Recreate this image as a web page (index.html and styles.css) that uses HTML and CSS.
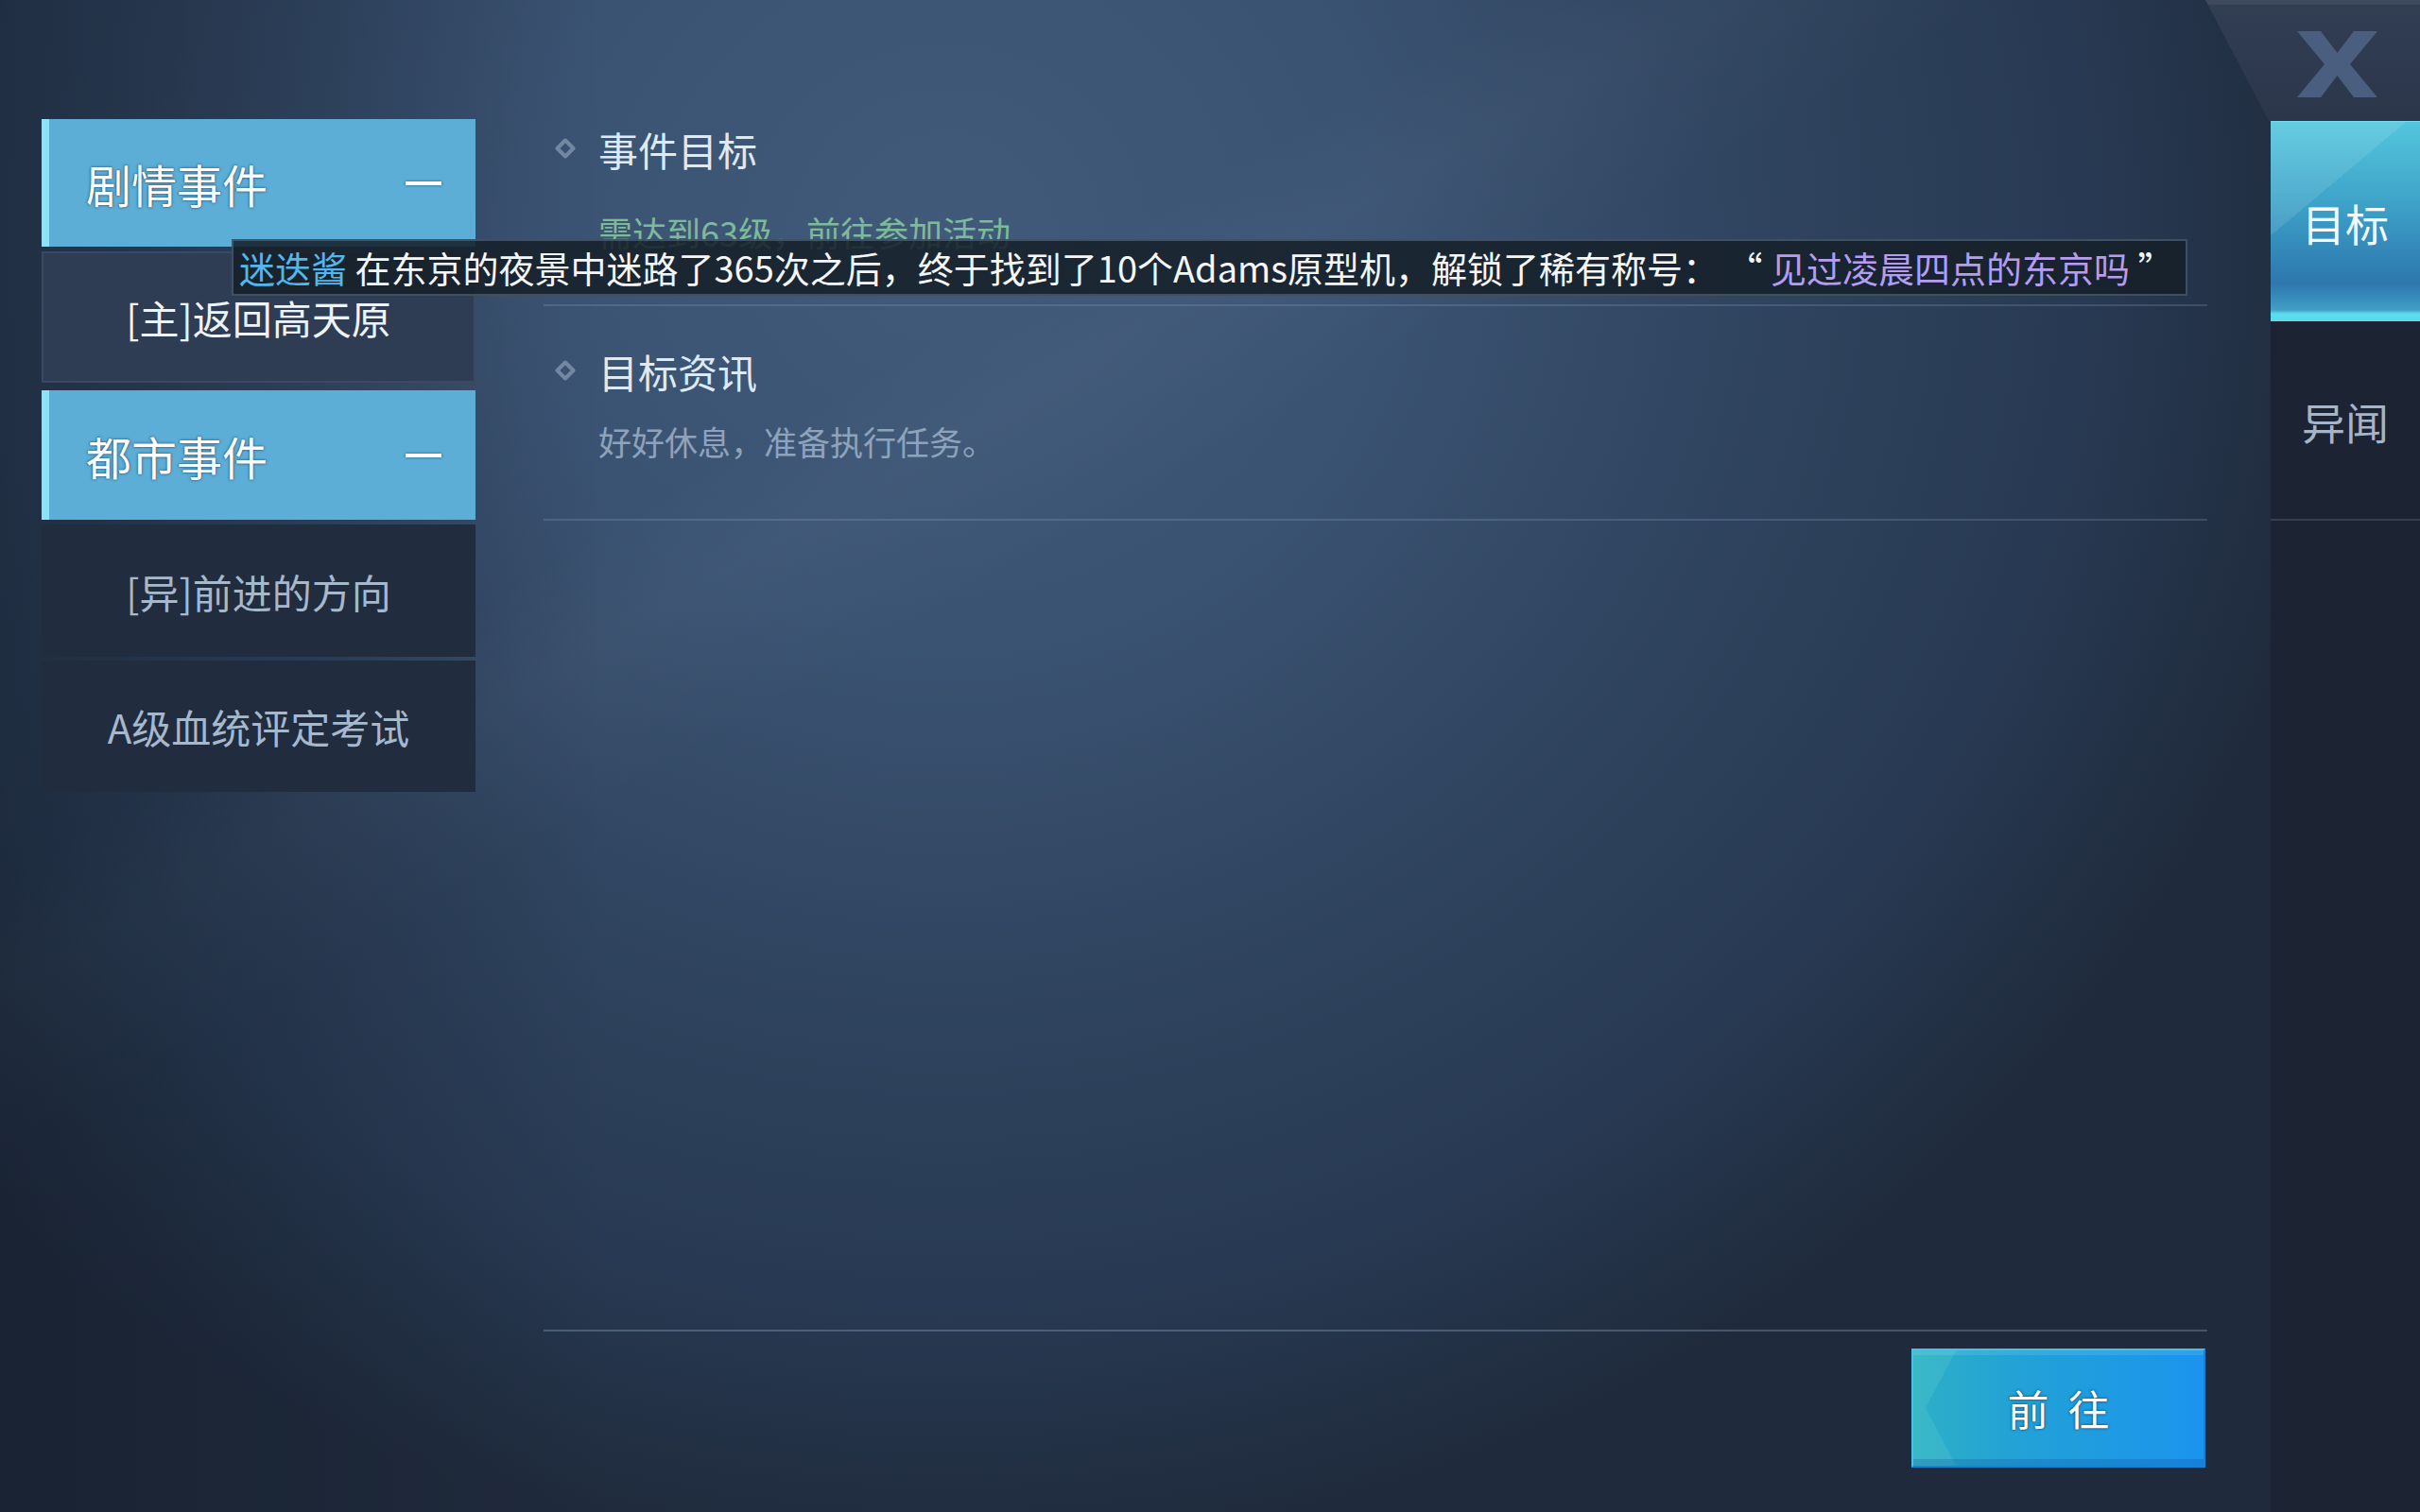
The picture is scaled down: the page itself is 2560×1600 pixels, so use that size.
FILE: index.html
```html
<!DOCTYPE html>
<html lang="zh-CN">
<head>
    <meta charset="UTF-8" />
    <meta name="viewport" content="width=device-width, initial-scale=1" />
    <title>事件</title>
    <link rel="stylesheet" href="styles.css">
</head>
<body>
    <div class="screen">
        <aside class="events">
            <div class="group-head"><span>剧情事件</span><i class="collapse"></i></div>
            <div class="event current">[主]返回高天原</div>
            <div class="group-head city"><span>都市事件</span><i class="collapse"></i></div>
            <div class="event first">[异]前进的方向</div>
            <div class="event">A级血统评定考试</div>
        </aside>

        <main class="detail">
            <section class="block goal-block">
                <h2 class="block-title">
                    <svg class="diamond" viewBox="0 0 24 24" width="24" height="24"><path d="M12 3.5 L20.5 12 L12 20.5 L3.5 12 Z" fill="none" stroke="#7a8ea6" stroke-width="4" stroke-linejoin="round"/></svg>
                    事件目标
                </h2>
                <p class="goal">需达到63级，前往参加活动</p>
            </section>
            <section class="block info-block">
                <h2 class="block-title">
                    <svg class="diamond" viewBox="0 0 24 24" width="24" height="24"><path d="M12 3.5 L20.5 12 L12 20.5 L3.5 12 Z" fill="none" stroke="#7a8ea6" stroke-width="4" stroke-linejoin="round"/></svg>
                    目标资讯
                </h2>
                <p class="info">好好休息，准备执行任务。</p>
            </section>
            <div class="spacer"></div>
            <footer class="actions">
                <button class="go">前往</button>
            </footer>
        </main>

        <nav class="tabs">
            <div class="tabs-top"></div>
            <div class="tab-list">
                <button class="tab active">目标</button>
                <button class="tab">异闻</button>
            </div>
        </nav>
    </div>

    <button class="close" aria-label="关闭">
        <svg viewBox="0 0 85 70" width="85" height="70">
            <polygon points="0,0 25,0 42.5,23 60,0 85,0 56,35 85,70 60,70 42.5,47 25,70 0,70 29,35" fill="#4a5f80"/>
        </svg>
    </button>

    <div class="broadcast">
        <span class="name">迷迭酱</span> 在东京的夜景中迷路了365次之后，终于找到了10个Adams原型机，解锁了稀有称号： “ <span class="title">见过凌晨四点的东京吗</span> ”
    </div>
</body>
</html>
```

FILE: styles.css
```css
body {
    margin: 0;
    width: 2560px;
    height: 1600px;
    overflow: hidden;
    position: relative;
    font-family: "Noto Sans CJK SC", "Noto Sans", sans-serif;
    background-color: #1f2a3c;
    background-image:
        linear-gradient(to right, rgba(18, 26, 40, 0.45) 0, rgba(18, 26, 40, 0) 640px),
        linear-gradient(150deg, rgba(255, 255, 255, 0) 30%, rgba(255, 255, 255, 0.025) 34%, rgba(255, 255, 255, 0) 40%),
        radial-gradient(ellipse 1500px 1400px at 1000px 250px, #415a7a 0%, #3b5373 30%, #304560 55%, #283a53 80%, #1f2a3c 100%);
}
.screen {
    display: flex;
    height: 1600px;
}

/* left list */
.events {
    margin: 126px 0 0 44px;
    width: 459px;
    display: flex;
    flex-direction: column;
}
.group-head {
    box-sizing: border-box;
    height: 135px;
    display: flex;
    align-items: center;
    justify-content: space-between;
    padding: 0 36px 0 39px;
    background: #5caed7;
    border-left: 8px solid #8fe2f6;
    color: #fff;
    font-size: 48px;
    text-shadow: 0 0 3px rgba(25, 70, 105, 0.9), 0 0 1px rgba(25, 70, 105, 0.9);
}
.group-head.city {
    margin-top: 8px;
    height: 137px;
}
.collapse {
    width: 38px;
    height: 4px;
    background: #fff;
    box-shadow: 0 0 3px rgba(25, 70, 105, 0.8);
}
.event {
    box-sizing: border-box;
    height: 139px;
    display: flex;
    align-items: center;
    justify-content: center;
    margin-top: 4px;
    background: #212c3f;
    color: #a5b8cc;
    font-size: 42px;
}
.event.first {
    margin-top: 5px;
    height: 140px;
}
.event.current {
    margin-top: 5px;
    background: #2e3c54;
    border: 2px solid #3b4a62;
    color: #eef3f8;
}

/* detail */
.detail {
    margin-left: 72px;
    width: 1760px;
    display: flex;
    flex-direction: column;
}
.block {
    border-bottom: 2px solid rgba(165, 190, 220, 0.2);
}
.goal-block {
    padding: 127px 0 52px;
}
.info-block {
    padding: 38px 0 57px;
}
.block-title {
    margin: 0;
    height: 60px;
    display: flex;
    align-items: center;
    gap: 23px;
    padding-left: 11px;
    font-size: 42px;
    font-weight: normal;
    color: #dfe9f3;
}
.diamond {
    flex-shrink: 0;
    opacity: 0.9;
}
.goal, .info {
    margin: 0;
    padding-left: 58px;
    line-height: 50px;
    font-size: 35px;
}
.goal {
    margin-top: 33px;
    font-size: 36px;
    color: #7cba9a;
}
.info {
    margin-top: 20px;
    color: #8ea3bb;
}
.spacer {
    flex: 1;
}
.actions {
    border-top: 2px solid rgba(165, 190, 220, 0.3);
    padding: 18px 2px 47px 0;
    display: flex;
    justify-content: flex-end;
}
.go {
    width: 311px;
    height: 126px;
    box-sizing: border-box;
    border: 2px solid #49bfeb;
    border-bottom-color: #1d7fcf;
    border-right-color: #1d7fcf;
    background:
        linear-gradient(to bottom, rgba(255, 255, 255, 0.1) 0, rgba(255, 255, 255, 0.1) 5px, rgba(255, 255, 255, 0) 5px, rgba(255, 255, 255, 0) calc(100% - 7px), rgba(10, 60, 150, 0.22) calc(100% - 7px)),
        linear-gradient(62deg, rgba(110, 215, 205, 0.2) 0, rgba(110, 215, 205, 0.2) 40px, rgba(110, 215, 205, 0) 40px) left bottom / 110px 50% no-repeat,
        linear-gradient(118deg, rgba(110, 215, 205, 0.2) 0, rgba(110, 215, 205, 0.2) 40px, rgba(110, 215, 205, 0) 40px) left top / 110px 50% no-repeat,
        linear-gradient(90deg, #2db0c6 0%, #22a2d6 35%, #1a94ee 100%);
    color: #fff;
    font-family: inherit;
    font-size: 44px;
    letter-spacing: 20px;
    padding: 0 0 0 20px;
    text-shadow: 0 0 3px rgba(10, 60, 110, 0.9), 0 0 1px rgba(10, 60, 110, 0.9);
    cursor: pointer;
}

/* right tabs */
.tabs {
    margin-left: 67px;
    width: 158px;
    display: flex;
    flex-direction: column;
}
.tabs-top {
    height: 128px;
}
.tab-list {
    flex: 1;
    display: flex;
    flex-direction: column;
    background: #1c2333;
}
.tab {
    height: 211px;
    border: none;
    border-bottom: 2px solid #353f50;
    background: transparent;
    color: #a3b5ca;
    font-family: inherit;
    font-size: 46px;
    padding: 0;
    cursor: pointer;
}
.tab.active {
    height: 212px;
    border-top: 1px solid #6fdcef;
    border-bottom: none;
    color: #f4f9fc;
    background:
        linear-gradient(to top, #5adcee 0, #5adcee 8px, rgba(90, 220, 238, 0.45) 12px, rgba(90, 220, 238, 0) 40px),
        linear-gradient(140deg, rgba(255, 255, 255, 0.1) 0, rgba(255, 255, 255, 0.1) 35%, rgba(255, 255, 255, 0) 35%),
        linear-gradient(to bottom, #54c6de 0%, #3ea3c8 40%, #2f7db2 75%, #2b6aa4 100%);
}

/* close corner */
.close {
    position: absolute;
    top: 0;
    right: 0;
    width: 227px;
    height: 128px;
    border: none;
    padding: 0;
    clip-path: polygon(0 0, 100% 0, 100% 100%, 67px 100%);
    background:
        linear-gradient(to bottom, rgba(255, 255, 255, 0.06) 0, rgba(255, 255, 255, 0.06) 5px, rgba(255, 255, 255, 0) 5px),
        linear-gradient(to bottom, #323e54, #2b364b);
    cursor: pointer;
}
.close svg {
    position: absolute;
    left: 97px;
    top: 33px;
}

/* scrolling broadcast */
.broadcast {
    position: absolute;
    left: 245px;
    top: 253px;
    width: 2069px;
    height: 60px;
    box-sizing: border-box;
    padding-left: 6px;
    background: rgba(22, 32, 41, 0.88);
    border: 2px solid rgba(90, 110, 130, 0.6);
    color: #f4f6f8;
    font-size: 38px;
    line-height: 56px;
    white-space: nowrap;
}
.broadcast .name {
    color: #52b7ec;
}
.broadcast .title {
    color: #b59cf0;
}
```
